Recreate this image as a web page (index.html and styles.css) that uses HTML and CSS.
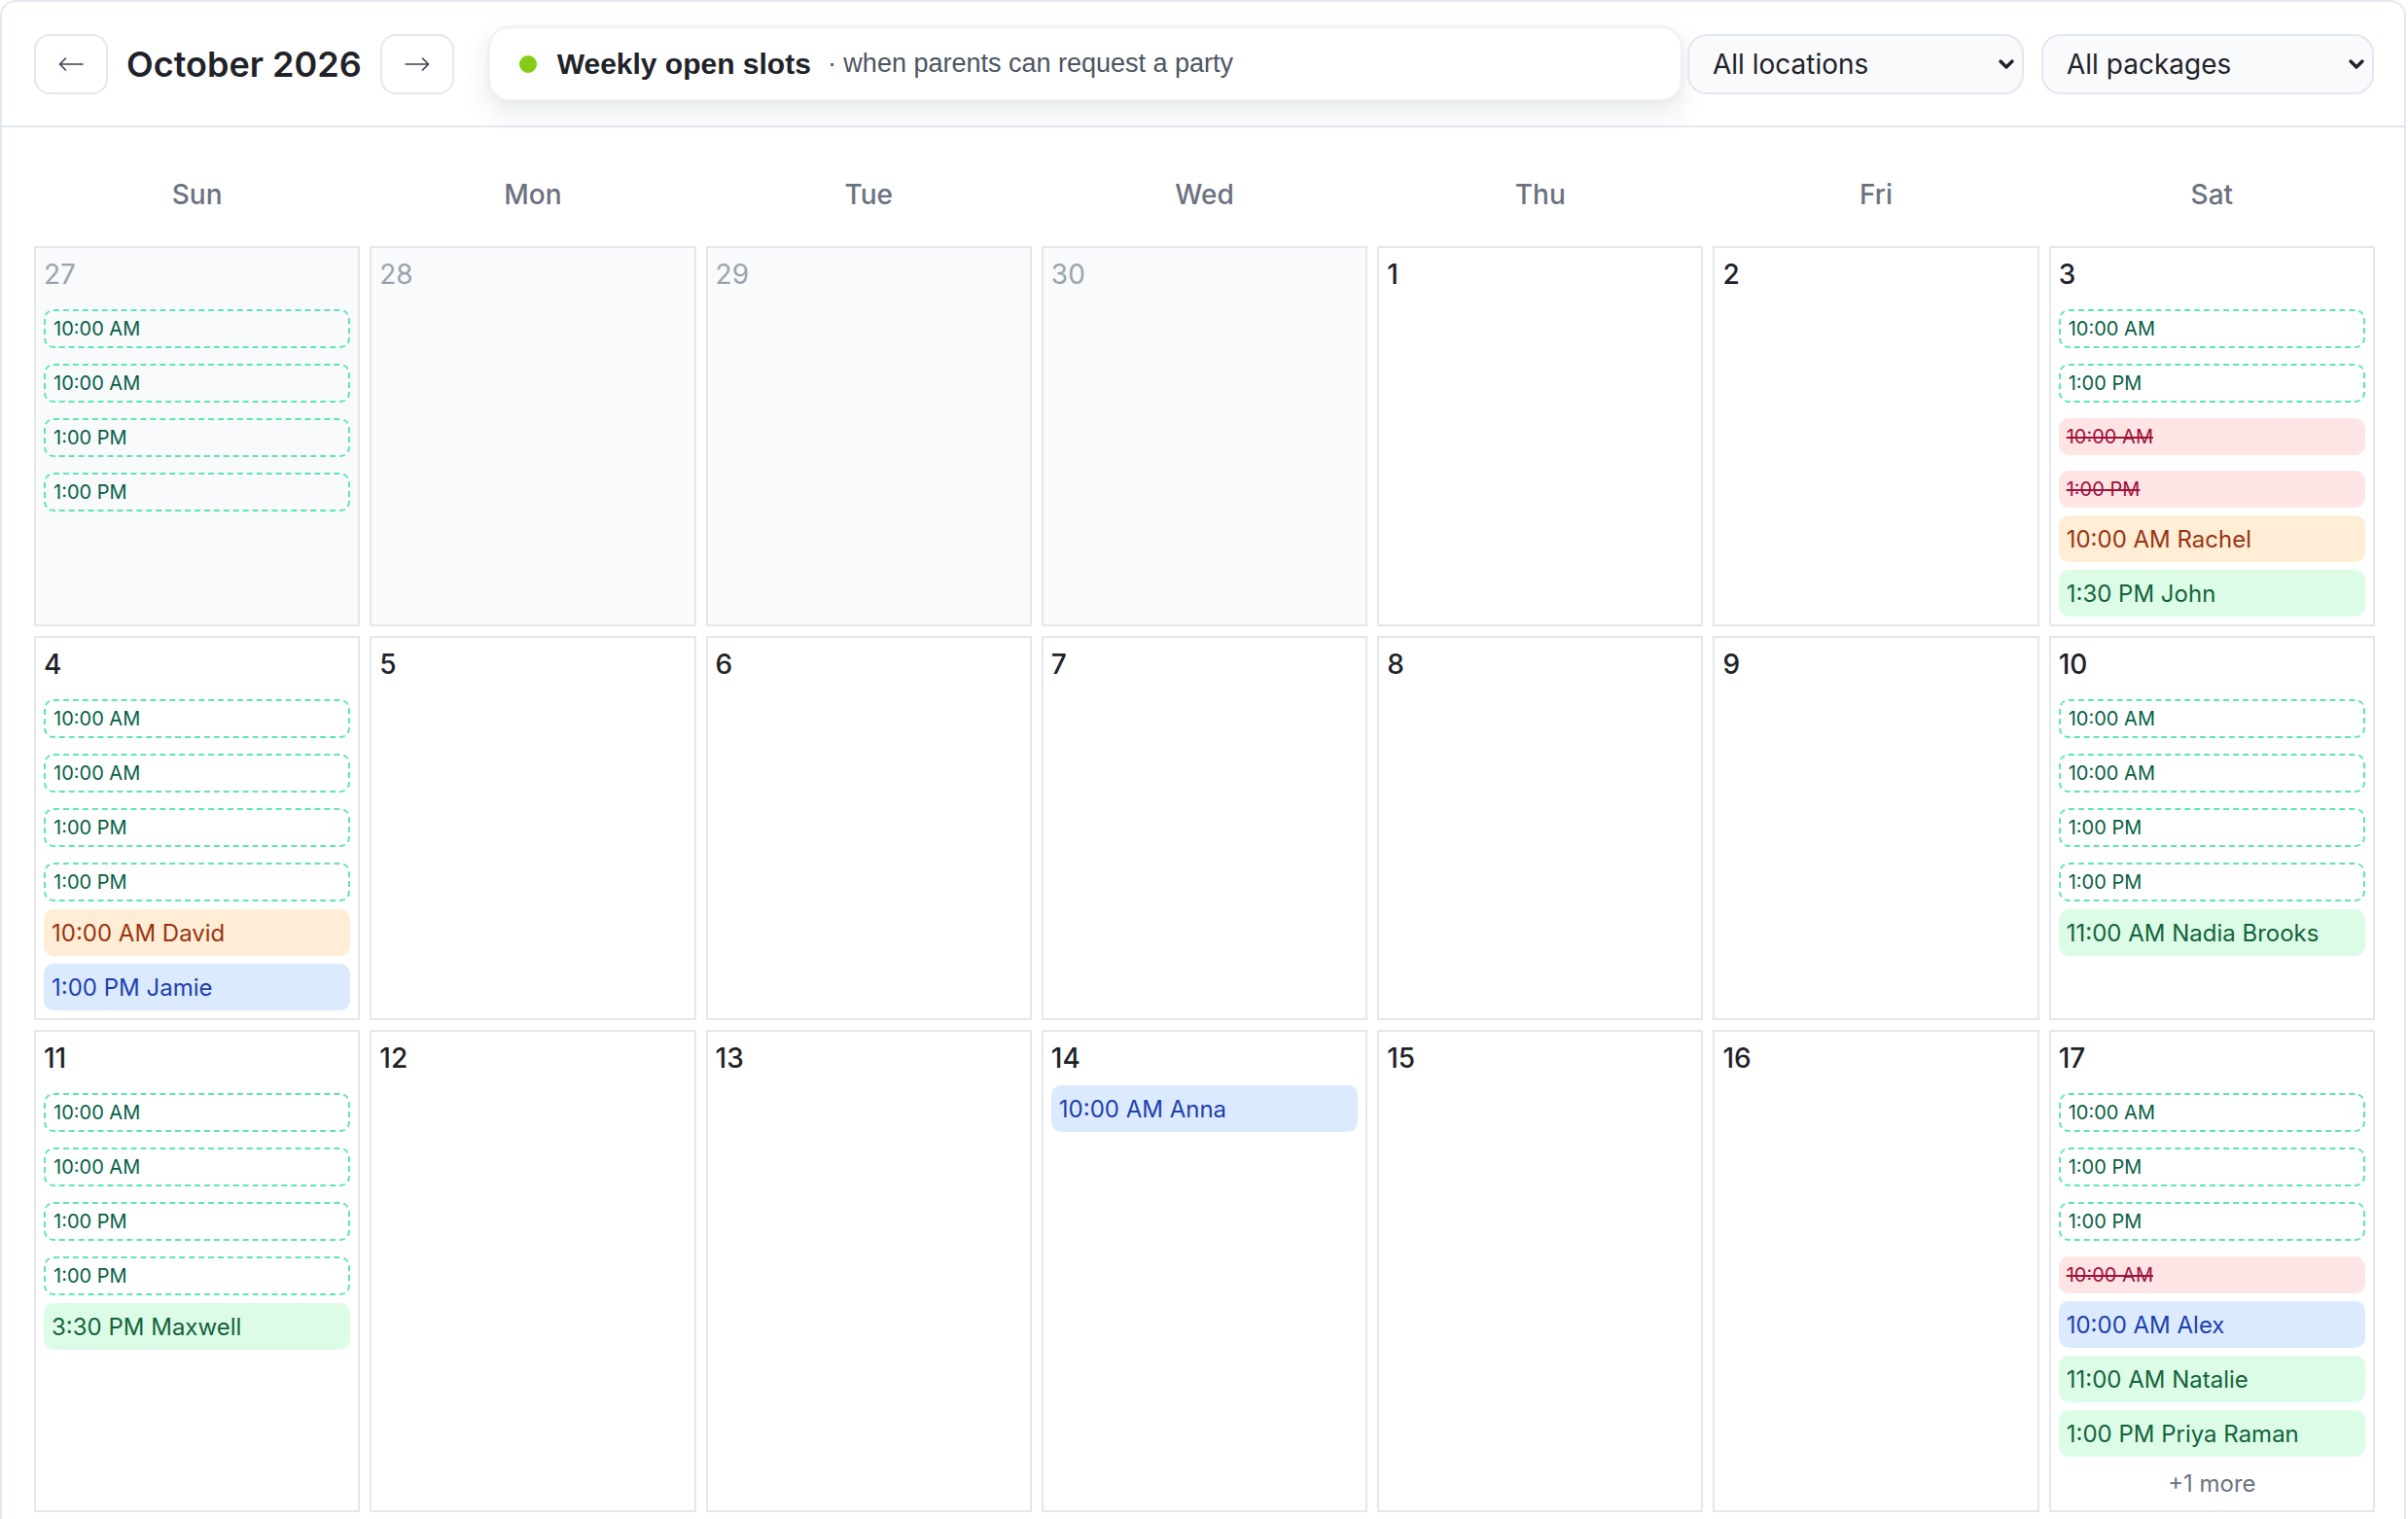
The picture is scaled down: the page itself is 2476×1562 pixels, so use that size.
FILE: index.html
```html
<!DOCTYPE html>
<html lang="en">
<head>
<meta charset="utf-8">
<title>October 2026 – Party calendar</title>
<link rel="stylesheet" href="styles.css">
</head>
<body>
<div class="app">
  <header class="toolbar">
    <button class="nav-btn" aria-label="Previous month">
      <svg class="arrow" width="26" height="14" viewBox="0 0 26 14"><path d="M25 7H1.5M7.5 1L1.5 7l6 6" fill="none" stroke="#374151" stroke-width="1.6" stroke-linecap="round" stroke-linejoin="round"/></svg>
    </button>
    <h1 class="month">October 2026</h1>
    <button class="nav-btn" aria-label="Next month">
      <svg class="arrow" width="26" height="14" viewBox="0 0 26 14"><path d="M1 7h23.5M18.5 1l6 6-6 6" fill="none" stroke="#374151" stroke-width="1.6" stroke-linecap="round" stroke-linejoin="round"/></svg>
    </button>
    <div class="legend">
      <span class="dot"></span>
      <span class="legend-title">Weekly open slots</span>
      <span class="legend-sub">· when parents can request a party</span>
    </div>
    <div class="select select-loc">
      <span>All locations</span>
      <svg width="18" height="12" viewBox="0 0 18 12"><path d="M3 3l6 6 6-6" fill="none" stroke="#1f2329" stroke-width="3.4" stroke-linecap="round" stroke-linejoin="round"/></svg>
    </div>
    <div class="select select-pkg">
      <span>All packages</span>
      <svg width="18" height="12" viewBox="0 0 18 12"><path d="M3 3l6 6 6-6" fill="none" stroke="#1f2329" stroke-width="3.4" stroke-linecap="round" stroke-linejoin="round"/></svg>
    </div>
  </header>

  <main class="calendar">
    <div class="weekdays">
      <div class="weekday">Sun</div>
      <div class="weekday">Mon</div>
      <div class="weekday">Tue</div>
      <div class="weekday">Wed</div>
      <div class="weekday">Thu</div>
      <div class="weekday">Fri</div>
      <div class="weekday">Sat</div>
    </div>

    <div class="grid">
      <!-- Week 1 -->
      <div class="cell other">
        <div class="num">27</div>
        <div class="items">
          <div class="slot">10:00 AM</div>
          <div class="slot">10:00 AM</div>
          <div class="slot">1:00 PM</div>
          <div class="slot">1:00 PM</div>
        </div>
      </div>
      <div class="cell other"><div class="num">28</div></div>
      <div class="cell other"><div class="num">29</div></div>
      <div class="cell other"><div class="num">30</div></div>
      <div class="cell"><div class="num">1</div></div>
      <div class="cell"><div class="num">2</div></div>
      <div class="cell">
        <div class="num">3</div>
        <div class="items">
          <div class="slot">10:00 AM</div>
          <div class="slot">1:00 PM</div>
          <div class="cancel">10:00 AM</div>
          <div class="cancel">1:00 PM</div>
          <div class="booking orange">10:00 AM Rachel</div>
          <div class="booking green">1:30 PM John</div>
        </div>
      </div>

      <!-- Week 2 -->
      <div class="cell">
        <div class="num">4</div>
        <div class="items">
          <div class="slot">10:00 AM</div>
          <div class="slot">10:00 AM</div>
          <div class="slot">1:00 PM</div>
          <div class="slot">1:00 PM</div>
          <div class="booking orange">10:00 AM David</div>
          <div class="booking blue">1:00 PM Jamie</div>
        </div>
      </div>
      <div class="cell"><div class="num">5</div></div>
      <div class="cell"><div class="num">6</div></div>
      <div class="cell"><div class="num">7</div></div>
      <div class="cell"><div class="num">8</div></div>
      <div class="cell"><div class="num">9</div></div>
      <div class="cell">
        <div class="num">10</div>
        <div class="items">
          <div class="slot">10:00 AM</div>
          <div class="slot">10:00 AM</div>
          <div class="slot">1:00 PM</div>
          <div class="slot">1:00 PM</div>
          <div class="booking green">11:00 AM Nadia Brooks</div>
        </div>
      </div>

      <!-- Week 3 -->
      <div class="cell">
        <div class="num">11</div>
        <div class="items">
          <div class="slot">10:00 AM</div>
          <div class="slot">10:00 AM</div>
          <div class="slot">1:00 PM</div>
          <div class="slot">1:00 PM</div>
          <div class="booking green">3:30 PM Maxwell</div>
        </div>
      </div>
      <div class="cell"><div class="num">12</div></div>
      <div class="cell"><div class="num">13</div></div>
      <div class="cell">
        <div class="num">14</div>
        <div class="items">
          <div class="booking blue">10:00 AM Anna</div>
        </div>
      </div>
      <div class="cell"><div class="num">15</div></div>
      <div class="cell"><div class="num">16</div></div>
      <div class="cell">
        <div class="num">17</div>
        <div class="items">
          <div class="slot">10:00 AM</div>
          <div class="slot">1:00 PM</div>
          <div class="slot">1:00 PM</div>
          <div class="cancel">10:00 AM</div>
          <div class="booking blue">10:00 AM Alex</div>
          <div class="booking green">11:00 AM Natalie</div>
          <div class="booking green">1:00 PM Priya Raman</div>
          <div class="more">+1 more</div>
        </div>
      </div>
    </div>
  </main>
</div>
</body>
</html>
```

FILE: styles.css
```css
* {
  box-sizing: border-box;
}

html,
body {
  margin: 0;
  padding: 0;
}

body {
  background: #ffffff;
  font-family: Inter, "Noto Sans", sans-serif;
  color: #1f2329;
  overflow: hidden;
}

.app {
  width: 2474px;
  height: 1562px;
  border: 2px solid #e2e8f0;
  border-bottom: none;
  border-radius: 16px 16px 0 0;
  background: #ffffff;
  overflow: hidden;
}

/* ---------- toolbar ---------- */
.toolbar {
  height: 129px;
  border-bottom: 2px solid #e2e8f0;
  display: flex;
  align-items: center;
  padding: 0 31px 0 33px;
}

.nav-btn {
  width: 76px;
  height: 62px;
  flex: none;
  padding: 0;
  border: 2px solid #e5e7eb;
  border-radius: 16px;
  background: #ffffff;
  display: flex;
  align-items: center;
  justify-content: center;
}

.month {
  margin: 0 19px;
  font-size: 36px;
  font-weight: 600;
  line-height: 1;
  color: #1f2329;
  white-space: nowrap;
}

.legend {
  flex: 1;
  min-width: 0;
  height: 77px;
  margin-left: 35px;
  border: 2px solid #eef0f3;
  border-radius: 22px;
  background: #ffffff;
  box-shadow: 0 12px 30px rgba(15, 23, 42, 0.09), 0 2px 6px rgba(15, 23, 42, 0.04);
  display: flex;
  align-items: center;
  padding-left: 30px;
  white-space: nowrap;
}

.dot {
  width: 18px;
  height: 18px;
  border-radius: 50%;
  background: #84cc16;
  margin-right: 21px;
  flex: none;
}

.legend-title {
  font-family: "Liberation Sans", Arial, sans-serif;
  font-weight: 700;
  font-size: 30px;
  color: #1f2329;
}

.legend-sub {
  font-family: "Liberation Sans", Arial, sans-serif;
  font-size: 27px;
  color: #4b5563;
  margin-left: 17px;
}

.select {
  height: 62px;
  flex: none;
  border: 2px solid #e2e8f0;
  border-radius: 20px;
  background: #f9fafc;
  display: flex;
  align-items: center;
  justify-content: space-between;
  padding: 0 7px 0 24px;
  font-size: 28px;
  color: #1f2329;
}

.select-loc {
  width: 346px;
  margin-left: 5px;
}

.select-pkg {
  width: 342px;
  margin-left: 18px;
}

/* ---------- calendar ---------- */
.calendar {
  padding: 0 30px 0 33px;
}

.weekdays {
  display: grid;
  grid-template-columns: repeat(7, minmax(0, 1fr));
  gap: 10px;
  height: 122px;
  padding-top: 49px;
}

.weekday {
  text-align: center;
  font-size: 28px;
  line-height: 40px;
  font-weight: 500;
  color: #6b7280;
}

.grid {
  display: grid;
  grid-template-columns: repeat(7, minmax(0, 1fr));
  gap: 10px;
}

.cell {
  border: 2px solid #e5e7eb;
  background: #ffffff;
  padding: 8px;
  min-width: 0;
}

.cell.other {
  background: #f8fafc;
}

.num {
  font-size: 28px;
  line-height: 38px;
  font-weight: 500;
  color: #1f2329;
  margin-bottom: 9px;
}

.cell.other .num {
  color: #9ca3af;
  font-weight: 400;
}

.items {
  display: flex;
  flex-direction: column;
  gap: 8px;
}

.slot {
  height: 40px;
  margin-top: 8px;
  border: 2px dashed #5ee6b2;
  border-radius: 10px;
  padding: 0 8px;
  display: flex;
  align-items: center;
  font-size: 20px;
  color: #065f46;
  white-space: nowrap;
}

.cancel {
  height: 38px;
  margin-top: 8px;
  border-radius: 10px;
  background: #ffe4e6;
  padding: 0 8px;
  display: flex;
  align-items: center;
  font-size: 20px;
  color: #9f1239;
  text-decoration: line-through;
  white-space: nowrap;
}

.booking {
  height: 48px;
  border-radius: 10px;
  padding: 0 8px;
  display: flex;
  align-items: center;
  font-size: 24px;
  white-space: nowrap;
}

.booking.orange {
  background: #ffedd5;
  color: #9a3412;
}

.booking.green {
  background: #dcfce7;
  color: #14633b;
}

.booking.blue {
  background: #dbeafe;
  color: #1e40af;
}

.more {
  text-align: center;
  font-size: 24px;
  line-height: 39px;
  color: #6b7280;
}
```
